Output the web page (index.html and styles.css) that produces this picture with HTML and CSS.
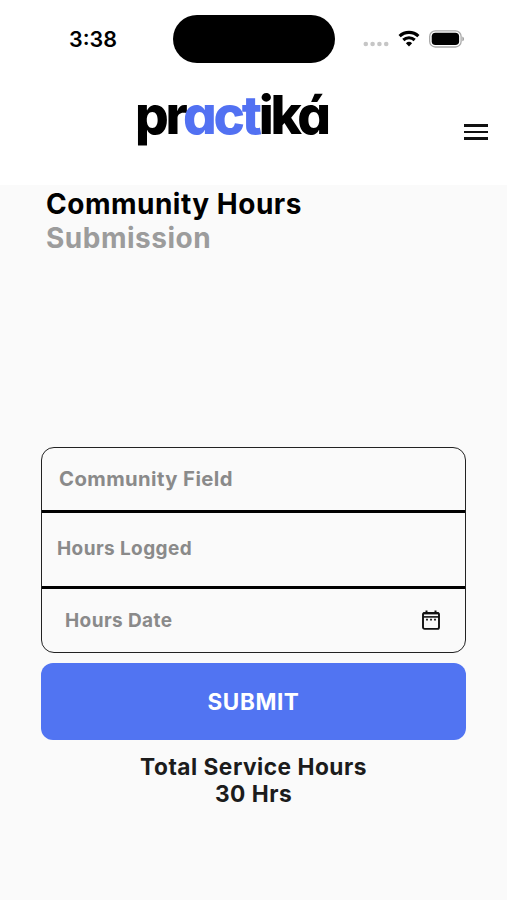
FILE: index.html
```html
<!DOCTYPE html>
<html lang="en">

<head>
    <meta charset="UTF-8">
    <meta name="viewport" content="width=device-width, initial-scale=1.0">
    <title>Community Hours</title>
    <link rel="stylesheet" href="styles.css">
</head>

<body>
    <header class="header">
        <div class="status-bar">
            <div class="time">3:38</div>
            <div class="island"></div>
            <div class="status-icons">
                <svg class="signal" width="26" height="6" viewBox="0 0 26 6" fill="#c6c6c6">
                    <circle cx="2.8" cy="3" r="2.3" />
                    <circle cx="9.6" cy="3" r="2.3" />
                    <circle cx="16.4" cy="3" r="2.3" />
                    <circle cx="23.2" cy="3" r="2.3" />
                </svg>
                <svg class="wifi" width="22" height="17" viewBox="0 0 22 17" fill="none" stroke="#000" stroke-width="3.1">
                    <path d="M1.6 6.1 A13.6 13.6 0 0 1 20.4 6.1" />
                    <path d="M5.3 10 A8.3 8.3 0 0 1 16.7 10" />
                    <path d="M11 16.6 L7.9 13.3 A4.5 4.5 0 0 1 14.1 13.3 Z" fill="#000" stroke="none" />
                </svg>
                <svg class="battery" width="36" height="18" viewBox="0 0 36 18">
                    <rect x="0.7" y="0.8" width="31.4" height="16.2" rx="5.6" fill="none" stroke="#a8a8a8" stroke-width="1.3" />
                    <rect x="2.7" y="2.8" width="27.4" height="12.2" rx="3.8" fill="#000" />
                    <path d="M33.4 6.5 Q35 7.3 35 8.9 Q35 10.5 33.4 11.3 Z" fill="#999" />
                </svg>
            </div>
        </div>
        <div class="nav">
            <div class="logo">pr<span class="logo-accent">act</span>iká</div>
            <button class="menu-btn" aria-label="Menu">
                <span class="menu-line"></span>
                <span class="menu-line"></span>
                <span class="menu-line"></span>
            </button>
        </div>
    </header>

    <main class="content">
        <h1 class="title">Community Hours</h1>
        <h2 class="subtitle">Submission</h2>

        <form class="hours-form">
            <div class="fields">
                <div class="field field-community"><span class="label-community">Community Field</span></div>
                <div class="field field-logged"><span class="label-logged">Hours Logged</span></div>
                <div class="field field-date">
                    <span class="label-date">Hours Date</span>
                    <svg class="calendar" width="18" height="20" viewBox="0 0 18 20" fill="none" stroke="#111">
                        <rect x="1" y="2.9" width="16" height="16" rx="1.6" stroke-width="1.9" />
                        <path d="M1 3.4 H17" stroke-width="2" />
                        <path d="M1 6.9 H17" stroke-width="1.6" />
                        <path d="M4.5 0.4 V3 M13.5 0.4 V3" stroke-width="2" />
                        <path d="M4.1 9.7 H5.9 M8.1 9.7 H9.9 M12.1 9.7 H13.9" stroke-width="1.8" />
                    </svg>
                </div>
            </div>
            <button class="submit-btn" type="button">SUBMIT</button>
        </form>

        <div class="total">
            <div class="total-label">Total Service Hours</div>
            <div class="total-value">30 Hrs</div>
        </div>
    </main>
</body>

</html>
```

FILE: styles.css
```css
* {
    margin: 0;
    padding: 0;
    box-sizing: border-box;
}

body {
    background: #fafafa;
    font-family: 'Inter', 'Liberation Sans', sans-serif;
    min-height: 100vh;
    color: #000;
}

.header {
    height: 185px;
    background: #fff;
}

.status-bar {
    height: 78px;
    padding: 15px 42px 0 69px;
    display: flex;
    align-items: flex-start;
}

.time {
    width: 104px;
    padding-top: 10px;
    font-size: 21.5px;
    font-weight: 600;
    line-height: 28px;
}

.island {
    flex: none;
    width: 162px;
    height: 48px;
    border-radius: 24px;
    background: #000;
}

.status-icons {
    flex: 1;
    display: flex;
    padding: 14px 0 0 28px;
}

.signal {
    flex: none;
    margin-top: 12px;
}

.wifi {
    flex: none;
    margin: 1px 0 0 9px;
}

.battery {
    flex: none;
    margin: 1px 0 0 9px;
}

.nav {
    display: flex;
    justify-content: space-between;
    align-items: flex-start;
    padding: 0 19px 0 135px;
}

.logo {
    font-size: 53px;
    font-weight: 800;
    line-height: 74px;
    letter-spacing: -3.3px;
    font-feature-settings: "cv11";
}

.logo-accent {
    color: #5271f2;
}

.menu-btn {
    width: 24px;
    margin-top: 46px;
    border: none;
    background: none;
    display: flex;
    flex-direction: column;
    gap: 4px;
}

.menu-line {
    width: 24px;
    height: 2.5px;
    background: #111;
}

.content {
    padding: 3px 41px 0;
}

.title,
.subtitle {
    padding-left: 5px;
    font-size: 28px;
    font-weight: 700;
    line-height: 33.5px;
    letter-spacing: 0.5px;
}

.subtitle {
    color: #9c9c9c;
}

.hours-form {
    margin-top: 192px;
}

.fields {
    height: 206px;
    border: 1.5px solid #222;
    border-radius: 13px;
    display: flex;
    flex-direction: column;
}

.field {
    display: flex;
    align-items: center;
    color: #8a8a8a;
    font-size: 19px;
    font-weight: 650;
    letter-spacing: 0.4px;
}

.field-community {
    height: 65px;
    padding: 0 0 1px 17px;
    border-bottom: 3px solid #000;
    font-size: 20.3px;
}

.field-logged {
    height: 76px;
    padding: 0 0 2px 15px;
    border-bottom: 3px solid #000;
}

.field-date {
    flex: 1;
    justify-content: space-between;
    padding: 0 25px 1px 23px;
}

.submit-btn {
    display: block;
    width: 100%;
    height: 77px;
    margin-top: 10px;
    border: none;
    border-radius: 12px;
    background: #5174f2;
    color: #fff;
    font-family: inherit;
    font-size: 22.5px;
    font-weight: 650;
    letter-spacing: 0.6px;
}

.total {
    margin-top: 13px;
    color: #1c1c1c;
    text-align: center;
    font-size: 22.7px;
    font-weight: 650;
    line-height: 27px;
    letter-spacing: 0.5px;
}
```
